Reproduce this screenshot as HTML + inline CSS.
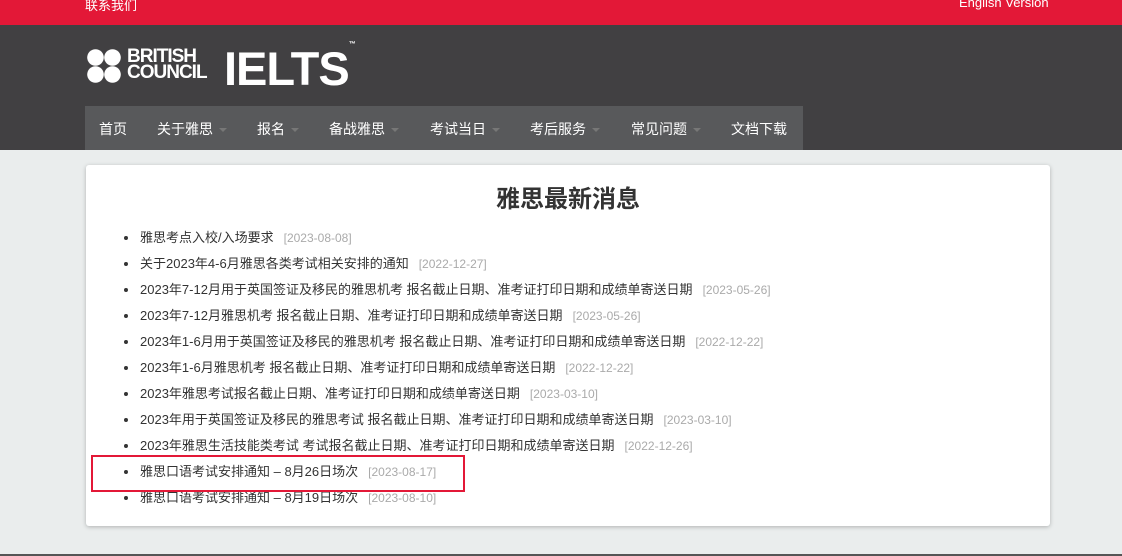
<!DOCTYPE html>
<html><head><meta charset="utf-8"><style>
*{margin:0;padding:0;box-sizing:border-box}
body{width:1122px;height:556px;overflow:hidden;background:#eaeded;font-family:"Liberation Sans","Noto Sans CJK SC",sans-serif;position:relative}
.top{position:absolute;left:0;top:0;width:1122px;height:25px;background:#e31837;color:#fff;font-size:13px}
.top span{position:absolute;top:-5px}
.hdr{position:absolute;left:0;top:25px;width:1122px;height:125px;background:#414042}
.nav{position:absolute;left:85px;top:106px;width:718px;height:44px;background:#58595b}
.nav span{position:absolute;top:13px;color:#fff;font-size:14px}
.nav i{display:inline-block;width:0;height:0;border-left:4px solid transparent;border-right:4px solid transparent;border-top:4px solid #777;margin-left:6px;vertical-align:middle}
.card{position:absolute;left:86px;top:165px;width:964px;height:361px;background:#fff;border-radius:3px;box-shadow:0 1px 4px rgba(0,0,0,.25)}
h1{position:absolute;top:14px;width:100%;text-align:center;font-size:24px;color:#333;font-weight:bold}
ul{position:absolute;left:53px;top:63px;list-style:disc;font-size:13px;color:#333}
li{height:26px;line-height:20px;padding-left:1px}
li em{font-style:normal;color:#aaa;font-size:12px;margin-left:10px}
.box{position:absolute;left:91px;top:455px;width:374px;height:37px;border:2px solid #e31837}
.bot{position:absolute;left:0;top:554px;width:1122px;height:2px;background:#555}
</style></head><body>
<div class="top"><span style="left:85px">联系我们</span><span style="left:959px">English Version</span></div>
<div class="hdr">
<svg style="position:absolute;left:87px;top:24px" width="36" height="36"><circle cx="8.5" cy="8.5" r="8.3" fill="#fff"/><circle cx="25.5" cy="8.5" r="8.3" fill="#fff"/><circle cx="8.5" cy="25.5" r="8.3" fill="#fff"/><circle cx="25.5" cy="25.5" r="8.3" fill="#fff"/></svg>
<div style="position:absolute;left:127px;top:24px;color:#fff;font-weight:bold;font-size:19px;line-height:16px;letter-spacing:-1px">BRITISH<br>COUNCIL</div>
<div style="position:absolute;left:224px;top:16px;color:#fff;font-weight:bold;font-size:47px;letter-spacing:-1px">IELTS<sup style="font-size:7px;vertical-align:top">™</sup></div>
</div>
<div class="nav">
<span style="left:14px">首页</span>
<span style="left:72px">关于雅思<i></i></span>
<span style="left:172px">报名<i></i></span>
<span style="left:244px">备战雅思<i></i></span>
<span style="left:345px">考试当日<i></i></span>
<span style="left:445px">考后服务<i></i></span>
<span style="left:546px">常见问题<i></i></span>
<span style="left:646px">文档下载</span>
</div>
<div class="card"><h1>雅思最新消息</h1>
<ul>
<li>雅思考点入校/入场要求<em>[2023-08-08]</em></li>
<li>关于2023年4-6月雅思各类考试相关安排的通知<em>[2022-12-27]</em></li>
<li>2023年7-12月用于英国签证及移民的雅思机考 报名截止日期、准考证打印日期和成绩单寄送日期<em>[2023-05-26]</em></li>
<li>2023年7-12月雅思机考 报名截止日期、准考证打印日期和成绩单寄送日期<em>[2023-05-26]</em></li>
<li>2023年1-6月用于英国签证及移民的雅思机考 报名截止日期、准考证打印日期和成绩单寄送日期<em>[2022-12-22]</em></li>
<li>2023年1-6月雅思机考 报名截止日期、准考证打印日期和成绩单寄送日期<em>[2022-12-22]</em></li>
<li>2023年雅思考试报名截止日期、准考证打印日期和成绩单寄送日期<em>[2023-03-10]</em></li>
<li>2023年用于英国签证及移民的雅思考试 报名截止日期、准考证打印日期和成绩单寄送日期<em>[2023-03-10]</em></li>
<li>2023年雅思生活技能类考试 考试报名截止日期、准考证打印日期和成绩单寄送日期<em>[2022-12-26]</em></li>
<li>雅思口语考试安排通知 – 8月26日场次<em>[2023-08-17]</em></li>
<li>雅思口语考试安排通知 – 8月19日场次<em>[2023-08-10]</em></li>
</ul></div>
<div class="box"></div>
<div class="bot"></div>
</body></html>
